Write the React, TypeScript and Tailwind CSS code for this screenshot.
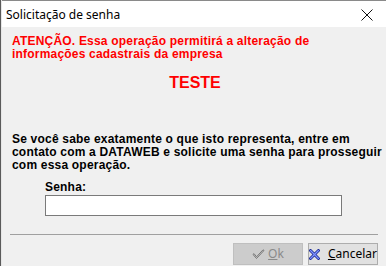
import React from 'react';

const uiFont = { fontFamily: '"Noto Sans", "Open Sans", sans-serif' };
const bodyFont = { fontFamily: '"Liberation Sans", Arial, sans-serif' };

function CheckIcon() {
  return (
    <svg width="13" height="11" viewBox="0 0 13 11" fill="none">
      <path d="M1 5.5 L4.5 9.5 L12 1.5 L11 0.8 L4.5 7.8 L2 4.6 Z" stroke="#6f6f6f" strokeWidth="0.9" strokeLinejoin="round" />
    </svg>
  );
}

function CrossIcon() {
  return (
    <svg width="11" height="11" viewBox="0 0 11 11" fill="none">
      <path d="M1.5 1.5 L9.5 9.5 M9.5 1.5 L1.5 9.5" stroke="#1f2f9a" strokeWidth="3" strokeLinecap="round" />
      <path d="M1.5 1.5 L9.5 9.5 M9.5 1.5 L1.5 9.5" stroke="#7f93ff" strokeWidth="1.2" strokeLinecap="round" />
    </svg>
  );
}

export default function App() {
  return (
    <div className="flex h-[266px] w-[386px] overflow-hidden bg-[#d9d9d9]">
      <div className="w-[2px] shrink-0 border-l border-[#5a5a5a] bg-[#e6e6e6]" />
      <div className="flex w-[384px] min-w-0 flex-col border-t border-[#8a8a8a] bg-white pt-[1px]">
        {/* title bar */}
        <div className="flex h-[25px] items-center justify-between bg-white pl-[4px] pr-[13px]" style={uiFont}>
          <span className="text-[12px] text-black">Solicitação de senha</span>
          <svg width="12" height="12" viewBox="0 0 12 12">
            <path d="M0.5 0.5 L11.5 11.5 M11.5 0.5 L0.5 11.5" stroke="#111" strokeWidth="1" />
          </svg>
        </div>

        {/* body */}
        <div className="flex min-w-0 flex-1 flex-col bg-[#f0f0f0] pl-[10px] pr-[8px]" style={bodyFont}>
          <p className="mt-[8px] whitespace-nowrap text-[12px] font-bold leading-[13px] tracking-[0.2px] text-[#ff0000]">
            ATENÇÃO. Essa operação permitirá a alteração de
            <br />
            informações cadastrais da empresa
          </p>
          <p className="mt-[14px] text-center text-[16px] font-bold leading-[16px] text-[#ff0000]">TESTE</p>

          <p className="mt-[42px] whitespace-nowrap text-[12px] font-bold leading-[13px] tracking-[0.2px] text-black">
            Se você sabe exatamente o que isto representa, entre em
            <br />
            contato com a DATAWEB e solicite uma senha para prosseguir
            <br />
            com essa operação.
          </p>

          <div className="ml-[33px] mt-[9px] flex flex-col">
            <span className="text-[12px] font-bold leading-[13px] tracking-[0.2px] text-black">Senha:</span>
            <div className="mt-[1px] h-[21px] w-[297px] border border-[#7a7a7a] bg-white" />
          </div>

          <div className="-ml-[2px] mt-[18px] h-[1px] bg-[#a0a0a0]" />

          <div className="mt-[8px] flex justify-end gap-[5px]" style={uiFont}>
            <div className="flex h-[22px] w-[70px] items-center justify-center gap-[3px] border border-[#bfbfbf] bg-[#cccccc] text-[12px] text-[#8a8a8a]">
              <CheckIcon />
              <span>
                <span className="underline">O</span>k
              </span>
            </div>
            <div className="flex h-[22px] w-[70px] items-center justify-center gap-[8px] border border-[#adadad] bg-[#e1e1e1] text-[12px] text-black">
              <CrossIcon />
              <span>
                <span className="underline">C</span>ancelar
              </span>
            </div>
          </div>
        </div>
      </div>
    </div>
  );
}
